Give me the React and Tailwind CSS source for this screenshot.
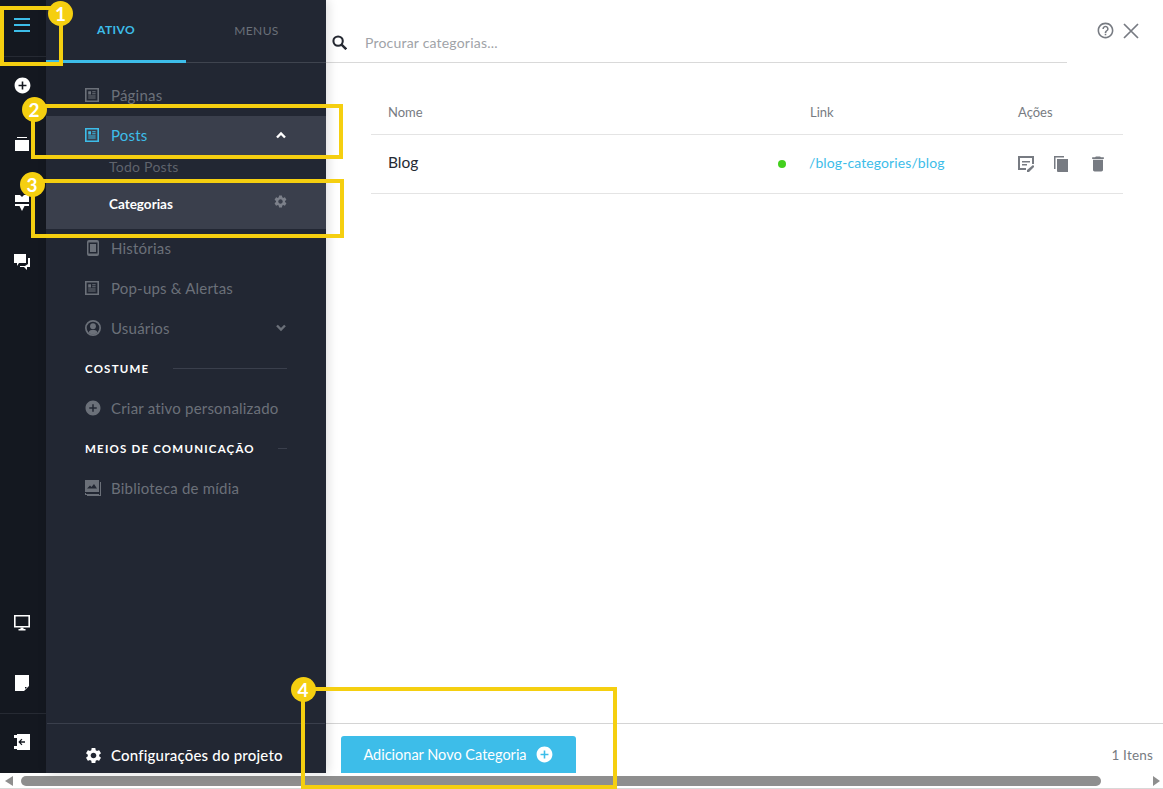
import React from "react";
import { MdAddCircle, MdDelete, MdSettings, MdHelpOutline } from "react-icons/md";

const PageIcon = ({ className = "" }) => (
  <svg viewBox="0 0 14 14" className={`w-[14px] h-[14px] ${className}`} fill="currentColor">
    <path fillRule="evenodd" d="M0 0h14v14H0zM1.6 1.6v10.8h10.8V1.6z" />
    <path d="M3.2 3.2h2.8v3.2H3.2zM7.2 3.2h3.4v1H7.2zM7.2 5.3h3.4v1H7.2zM3.2 7.6h7.4v1H3.2zM3.2 9.6h7.4v1H3.2z" />
  </svg>
);

const PhoneIcon = () => (
  <svg viewBox="0 0 12 16" className="w-[12px] h-[16px] ml-[2px]" fill="currentColor">
    <path fillRule="evenodd" d="M2 0h8a2 2 0 0 1 2 2v12a2 2 0 0 1-2 2H2a2 2 0 0 1-2-2V2a2 2 0 0 1 2-2zM1.5 2.5v11h9v-11z" />
    <path d="M3 4h6v8H3z" />
  </svg>
);

const UserIcon = () => (
  <svg viewBox="0 0 16 16" className="w-4 h-4" fill="currentColor">
    <path fillRule="evenodd" d="M8 0a8 8 0 1 1 0 16A8 8 0 0 1 8 0zm0 1.7a6.3 6.3 0 1 0 0 12.6A6.3 6.3 0 0 0 8 1.7z" />
    <circle cx="8" cy="6.2" r="2.9" />
    <path d="M3.5 12.4C4.5 10.4 6 9.8 8 9.8s3.5.6 4.5 2.6A6 6 0 0 1 8 14.5a6 6 0 0 1-4.5-2.1z" />
  </svg>
);

const LibraryIcon = () => (
  <svg viewBox="0 0 16 16" className="w-4 h-4" fill="currentColor">
    <path fillRule="evenodd" d="M0 0h14v12H0zM2 8.5h10L9 4 6.5 7 5 5.5z" />
    <path d="M15 2h1v14H2v-1h13z" />
    <path d="M0 13h1v1h13v1H0z" />
  </svg>
);

const Chevron = ({ up, className = "" }) => (
  <svg viewBox="0 0 12 8" className={`w-3 h-2 ${className}`} fill="none" stroke="currentColor" strokeWidth="2.4">
    <path d={up ? "M2 6.5l4-4 4 4" : "M2 1.5l4 4 4-4"} />
  </svg>
);

const Item = ({ icon, label, right, active }) => (
  <div className={`h-10 flex items-center pl-[39px] pr-[39px] pb-[2px] ${active ? "bg-[#3a3f4c] text-[#3dbde9]" : "text-[#6b7079]"}`}>
    <span className="w-[26px] flex items-center shrink-0">{icon}</span>
    <span className="flex-1 text-[15px] tracking-[0.2px]">{label}</span>
    {right}
  </div>
);

const Section = ({ label, gap }) => (
  <div className={`h-10 flex items-center pl-[39px] pr-[39px] pb-[1px] ${gap}`}>
    <span className="text-[11.5px] font-bold tracking-[1.2px] text-white uppercase whitespace-nowrap">{label}</span>
    <span className="flex-1 h-px bg-[#3a3f4c]" />
  </div>
);

const RailCell = ({ children, h = "h-[59px]" }) => (
  <div className={`${h} flex items-center justify-center pr-[2px] text-white`}>{children}</div>
);

const Marker = ({ n, className, bd }) => (
  <div className={`absolute z-20 border-4 border-[#f5cf10] pointer-events-none ${className}`}>
    <span className={`absolute w-[25px] h-[25px] rounded-full bg-[#f5cf10] text-white font-bold text-[19px] leading-[25px] text-center ${bd}`}>{n}</span>
  </div>
);

export default function App() {
  return (
    <div className="relative h-[789px] w-[1163px] overflow-hidden bg-white font-['Lato',sans-serif] flex flex-col">
      <div className="h-[773px] flex shrink-0">
        <aside className="w-[46px] shrink-0 bg-[#141820] flex flex-col">
          <div className="h-[57px] shrink-0 border-b border-[#262a33] flex justify-center pt-[18px] pr-[2px]">
            <div className="w-4 h-[14px] flex flex-col justify-between">
              <span className="h-0.5 bg-[#3dbde9]" />
              <span className="h-0.5 bg-[#3dbde9]" />
              <span className="h-0.5 bg-[#3dbde9]" />
            </div>
          </div>
          <RailCell h="h-[57px]"><MdAddCircle size={19} /></RailCell>
          <RailCell>
            <div className="flex flex-col items-center gap-[2px]">
              <span className="w-[10px] h-px bg-white" />
              <span className="w-[14px] h-[11px] bg-white" />
            </div>
          </RailCell>
          <RailCell>
            <svg viewBox="0 0 14 16" className="w-[14px] h-4" fill="currentColor">
              <path d="M0 0h5l2 2 2-2h5v7H0zM0 9h14v2H9.5L7 16l-2.5-5H0z" />
            </svg>
          </RailCell>
          <RailCell>
            <svg viewBox="0 0 16 16" className="w-4 h-4" fill="currentColor">
              <path d="M0 0h12v9H5l-2 3V9H0z" />
              <path d="M14 4h2v9h-3v3l-3-3H6v-1h5l3-2z" />
            </svg>
          </RailCell>
          <div className="flex-1" />
          <RailCell h="h-[60px]">
            <svg viewBox="0 0 16 16" className="w-4 h-4" fill="currentColor">
              <path fillRule="evenodd" d="M0 0h16v12.5H0zM1.6 1.6v9.3h12.8V1.6z" />
              <path d="M6.5 12.5h3V14h2v1.5h-7V14h2z" />
            </svg>
          </RailCell>
          <RailCell h="h-[60px]">
            <svg viewBox="0 0 14 16" className="w-[14px] h-4" fill="currentColor">
              <path fillRule="evenodd" d="M0 0h14v11l-5 5H0zM10 12v2l2-2z" />
            </svg>
          </RailCell>
          <div className="h-[60px] border-t border-[#262a33] flex justify-center pt-[20px] pr-[2px]">
            <svg viewBox="0 0 16 16" className="w-4 h-4 text-white" fill="currentColor">
              <path d="M3 0h13v16H3v-1H0v-3h3V4H0V1h3z" />
              <path fill="#141820" d="M0 4h2.5v8H0z" />
              <path fill="#141820" d="M11 7.2H6.8l1.6-1.6-.9-.9L4.3 8l3.2 3.3.9-.9-1.6-1.6H11z" />
            </svg>
          </div>
        </aside>

        <nav className="w-[280px] shrink-0 bg-[#222733] flex flex-col relative z-10 shadow-[2px_0_10px_rgba(0,0,0,0.14)]">
          <div className="h-[63px] flex border-b border-[#3f444f] text-[12px] tracking-[0.4px] uppercase">
            <div className="w-[140px] h-[63px] border-b-[3px] border-[#3dbde9] text-[#3dbde9] font-bold flex items-center justify-center">Ativo</div>
            <div className="flex-1 text-[#6b7079] flex items-center justify-center pl-[1px]">Menus</div>
          </div>
          <div className="pt-[13px] flex-1">
            <Item icon={<PageIcon />} label="Páginas" />
            <Item active icon={<PageIcon />} label="Posts" right={<Chevron up className="text-white" />} />
            <div className="h-6 flex items-center pl-[63px] pb-[2px] text-[#5f636c] text-sm tracking-[0.25px]">Todo Posts</div>
            <div className="h-[49px] bg-[#3a3f4c] flex items-center pl-[63px] pr-[38px]">
              <span className="flex-1 text-white text-[13.5px] font-bold">Categorias</span>
              <MdSettings size={15} className="text-[#7c808a] mb-1.5" />
            </div>
            <Item icon={<PhoneIcon />} label="Histórias" />
            <Item icon={<PageIcon />} label="Pop-ups & Alertas" />
            <Item icon={<UserIcon />} label="Usuários" right={<Chevron className="text-[#6b7079]" />} />
            <Section label="Costume" gap="gap-[24px]" />
            <Item icon={<MdAddCircle size={18} className="-ml-[1px]" />} label="Criar ativo personalizado" />
            <Section label="Meios de comunicação" gap="gap-[23px]" />
            <Item icon={<LibraryIcon />} label="Biblioteca de mídia" />
          </div>
          <div className="h-[50px] mx-px border-t border-[#3a3f4c] flex items-center pl-[38px] pt-[13px] text-white">
            <span className="w-[26px] flex items-center"><MdSettings size={19} className="-ml-[1px]" /></span>
            <span className="text-[15px] font-medium tracking-[0.2px]">Configurações do projeto</span>
          </div>
        </nav>

        <main className="flex-1 min-w-0 flex flex-col">
          <div className="h-[63px] flex items-start shrink-0 relative">
            <div className="w-[741px] h-[63px] border-b border-[#d9d9d9] flex items-center pt-[22px] pl-[6px]">
              <svg viewBox="0 0 16 16" className="w-[15px] h-[15px] mr-[18px] text-[#252932]" fill="none" stroke="currentColor" strokeWidth="2.2">
                <circle cx="6.5" cy="6.5" r="5" />
                <path d="M10.2 10.2l5 5" strokeWidth="2.6" />
              </svg>
              <span className="text-[14px] text-[#a0a3a8] tracking-[0.2px]">Procurar categorias...</span>
            </div>
            <div className="flex items-center ml-[29px] mt-[21px] text-[#777b82]">
              <MdHelpOutline size={19} />
              <svg viewBox="0 0 16 16" className="w-4 h-4 ml-[8px]" fill="none" stroke="currentColor" strokeWidth="1.7">
                <path d="M1 1l14 14M15 1L1 15" />
              </svg>
            </div>
          </div>

          <div className="flex-1 pt-[28px] pl-[45px] pr-[40px]">
            <div className="h-11 flex items-center border-b border-[#e4e4e4] text-[13px] text-[#777b82]">
              <span className="w-[439px] pl-[17px]">Nome</span>
              <span className="w-[208px]">Link</span>
              <span>Ações</span>
            </div>
            <div className="h-[59px] flex items-center border-b border-[#e4e4e4] pb-[2px]">
              <span className="w-[407px] pl-[17px] text-[15.5px] text-[#252932]">Blog</span>
              <span className="w-[32px]"><span className="block w-2 h-2 rounded-full bg-[#43d01d] mt-[2px]" /></span>
              <span className="w-[208px] text-[14px] text-[#3dbde9] tracking-[0.1px] -ml-[1px] mr-[1px] -mt-[1px]">/blog-categories/blog</span>
              <span className="flex items-center text-[#777b82] mt-[2px]">
                <svg viewBox="0 0 16 16" className="w-4 h-4 mr-[20px]" fill="currentColor">
                  <path d="M0 0h16v8h-2V2H2v10h6v2H0z" />
                  <path d="M4 5h8v1.5H4zM4 8h5v1.5H4z" />
                  <path d="M15 9l1.5 1.5-5.5 5.5H9v-2z" />
                </svg>
                <svg viewBox="0 0 14 16" className="w-[14px] h-4 mr-[21px]" fill="currentColor">
                  <path d="M0 0h10v1.5H1.5V13H0z" />
                  <path d="M3 3h11v13H4a1 1 0 0 1-1-1z" />
                </svg>
                <MdDelete size={20} className="-ml-[1px]" />
              </span>
            </div>
          </div>

          <div className="h-[50px] shrink-0 border-t border-[#d4d4d4] flex items-end justify-between pl-[15px] pr-[10px]">
            <button className="w-[235px] h-[37px] rounded-t-[3px] bg-[#3dbde9] text-white text-[14.5px] flex items-center justify-center gap-2">
              Adicionar Novo Categoria
              <MdAddCircle size={19} />
            </button>
            <span className="text-[13.5px] text-[#777b82] self-center mt-[14px] tracking-[0.2px]">1 Itens</span>
          </div>
        </main>
      </div>

      <div className="h-[16px] shrink-0 bg-white border-b border-[#d8d8d8] flex items-center px-[5px] gap-[8px]">
        <span className="w-0 h-0 border-y-[5px] border-y-transparent border-r-[8px] border-r-[#8e8e8e]" />
        <span className="w-[1080px] h-[10px] rounded-full bg-[#8e8e8e]" />
        <span className="flex-1" />
        <span className="w-0 h-0 border-y-[5px] border-y-transparent border-l-[7px] border-l-[#8e8e8e] mr-[-2px]" />
      </div>

      <Marker n="1" className="left-0 top-[6px] w-[63px] h-[60px]" bd="left-[44px] -top-[9.5px]" />
      <Marker n="2" className="left-[31px] top-[104px] w-[312px] h-[55px]" bd="-left-[13.5px] -top-[11.5px]" />
      <Marker n="3" className="left-[31px] top-[179px] w-[313px] h-[59px]" bd="-left-[15.5px] -top-[11.5px]" />
      <Marker n="4" className="left-[301px] top-[687px] w-[316px] h-[102px]" bd="-left-[14.5px] -top-[14.5px]" />
    </div>
  );
}
